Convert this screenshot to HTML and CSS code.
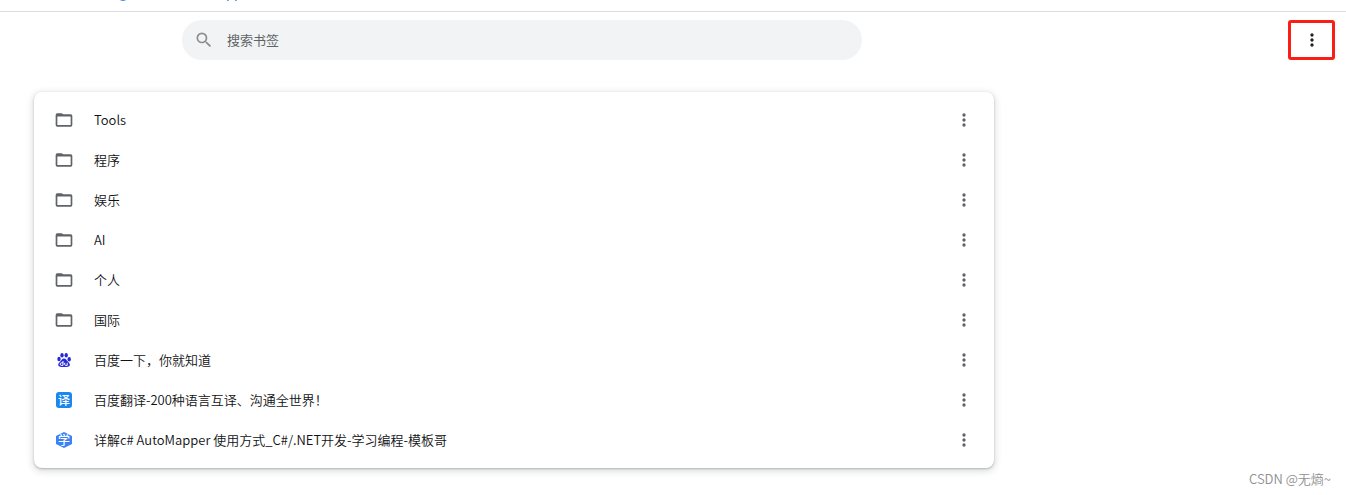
FILE: index.html
```html
<!DOCTYPE html>
<html lang="zh-CN">
<head>
<meta charset="utf-8">
<title>书签</title>
<link rel="stylesheet" href="styles.css">
</head>
<body>
<svg class="sprite" aria-hidden="true">
  <symbol id="folder" viewBox="0 0 24 24"><path fill-rule="evenodd" d="M4 4h5.200l2 1.200H20a2 2 0 0 1 2 2v10.800a2 2 0 0 1-2 2H4a2 2 0 0 1-2-2V6a2 2 0 0 1 2-2zm0 3.800v10.200h16V7.800z"/></symbol>
  <symbol id="dots" viewBox="0 0 24 24"><circle cx="12" cy="6" r="2"/><circle cx="12" cy="12" r="2"/><circle cx="12" cy="18" r="2"/></symbol>
</svg>
<nav class="bookmark-bar"><span class="dot"></span><a class="bar-link" href="#">pp</a></nav>
<header class="toolbar">
  <label class="search">
    <svg class="search-icon" viewBox="0 0 24 24" aria-hidden="true"><path d="M15.500 14h-.79l-.28-.27A6.470 6.470 0 0 0 16 9.500 6.500 6.500 0 1 0 9.500 16c1.610 0 3.090-.59 4.230-1.570l.27.28v.79l5 4.990L20.490 19l-4.990-5zm-6 0C7.010 14 5 11.990 5 9.500S7.010 5 9.500 5 14 7.010 14 9.500 11.990 14 9.500 14z"/></svg>
    <input class="search-input" type="search" placeholder="搜索书签" aria-label="搜索书签">
  </label>
  <button class="main-menu" type="button" aria-label="更多"><svg class="icon" viewBox="0 0 24 24"><use href="#dots"/></svg></button>
</header>
<main class="content">
  <ul class="card">
    <li class="row"><svg class="icon"><use href="#folder"/></svg><span class="title">Tools</span><button class="more" type="button" aria-label="更多操作"><svg class="icon"><use href="#dots"/></svg></button></li>
    <li class="row"><svg class="icon"><use href="#folder"/></svg><span class="title">程序</span><button class="more" type="button" aria-label="更多操作"><svg class="icon"><use href="#dots"/></svg></button></li>
    <li class="row"><svg class="icon"><use href="#folder"/></svg><span class="title">娱乐</span><button class="more" type="button" aria-label="更多操作"><svg class="icon"><use href="#dots"/></svg></button></li>
    <li class="row"><svg class="icon"><use href="#folder"/></svg><span class="title">AI</span><button class="more" type="button" aria-label="更多操作"><svg class="icon"><use href="#dots"/></svg></button></li>
    <li class="row"><svg class="icon"><use href="#folder"/></svg><span class="title">个人</span><button class="more" type="button" aria-label="更多操作"><svg class="icon"><use href="#dots"/></svg></button></li>
    <li class="row"><svg class="icon"><use href="#folder"/></svg><span class="title">国际</span><button class="more" type="button" aria-label="更多操作"><svg class="icon"><use href="#dots"/></svg></button></li>
    <li class="row"><svg class="icon" viewBox="0 0 20 20"><g fill="#2529d8"><ellipse cx="5" cy="9" rx="1.700" ry="2.200"/><ellipse cx="8" cy="5.300" rx="1.700" ry="2.300"/><ellipse cx="12.200" cy="5.300" rx="1.700" ry="2.300"/><ellipse cx="15.200" cy="9.200" rx="1.700" ry="2.200"/><path d="M10 8.500c2 0 2.400 1.700 3.800 3s2.500 2.500 1.900 4.100c-.6 1.500-2.200 1.500-5.700 1.300-3.500.2-5 .2-5.600-1.300-.6-1.600.5-2.800 1.900-4.100s1.700-3 3.700-3z"/></g><path d="M9 11v4.400H7.500a1.300 1.300 0 0 1 0-2.600H9M10.700 12.800v1.500c0 .8.300 1.100 1 1.100h1.500v-2.600" fill="none" stroke="#fff"/></svg><span class="title">百度一下，你就知道</span><button class="more" type="button" aria-label="更多操作"><svg class="icon"><use href="#dots"/></svg></button></li>
    <li class="row"><span class="badge badge-square" aria-hidden="true">译</span><span class="title">百度翻译-200种语言互译、沟通全世界！</span><button class="more" type="button" aria-label="更多操作"><svg class="icon"><use href="#dots"/></svg></button></li>
    <li class="row"><span class="badge badge-hex" aria-hidden="true">学</span><span class="title">详解c# AutoMapper 使用方式_C#/.NET开发-学习编程-模板哥</span><button class="more" type="button" aria-label="更多操作"><svg class="icon"><use href="#dots"/></svg></button></li>
  </ul>
</main>
<footer class="watermark">CSDN @无熵~</footer>
</body>
</html>
```
FILE: styles.css
```css
* { box-sizing: border-box; }
body {
  margin: 0;
  background: #fff;
  color: #111214;
  font: 350 13px/20px "Noto Sans CJK SC", sans-serif;
}
button { border: 0; background: none; padding: 0; font: inherit; cursor: pointer; }
.sprite { display: none; }
.icon { width: 20px; height: 20px; fill: #5f6368; flex: none; display: block; }

.bookmark-bar {
  display: flex;
  align-items: flex-end;
  height: 12px;
  padding-left: 118px;
  border-bottom: 1px solid #dadce0;
  overflow: hidden;
}
.dot { width: 10px; height: 10px; margin: 0 98px 10px 0; border-radius: 50%; background: #4c8bf5; flex: none; }
.bar-link { color: #3f6fae; font-weight: 400; text-decoration: none; padding-bottom: 8px; }

.toolbar {
  display: flex;
  justify-content: space-between;
  padding: 8px 11px 0 182px;
}
.search {
  display: flex;
  align-items: center;
  gap: 13px;
  flex: 0 1 680px;
  height: 40px;
  padding: 0 12px;
  border-radius: 20px;
  background: #f1f3f4;
}
.search-icon { width: 20px; height: 20px; fill: #8a8d91; flex: none; }
.search-input {
  flex: 1;
  min-width: 0;
  border: 0;
  padding: 0;
  outline: 0;
  background: none;
  font: inherit;
}
.search-input::placeholder { color: #5f6368; font-weight: 400; opacity: 1; }
.main-menu {
  display: grid;
  place-items: center;
  width: 47px;
  height: 40px;
  border: 3px solid #fb1e12;
  border-radius: 3px;
}
.main-menu .icon { fill: #202124; }

.content { padding: 32px 34px 0; }
.card {
  max-width: 960px;
  margin: 0;
  padding: 8px 20px;
  list-style: none;
  border-radius: 8px;
  background: #fff;
  box-shadow: 0 1px 2px rgba(60, 64, 67, .3), 0 2px 6px 2px rgba(60, 64, 67, .15);
}
.row { display: flex; align-items: center; height: 40px; }
.title {
  flex: 1;
  min-width: 0;
  margin-left: 20px;
  overflow: hidden;
  text-overflow: ellipsis;
  white-space: nowrap;
}
.badge {
  display: grid;
  place-items: center;
  width: 16px;
  height: 16px;
  margin: 0 2px;
  color: #fff;
  font-size: 12px;
  font-weight: 500;
  line-height: 16px;
  flex: none;
}
.badge-square { border-radius: 3px; background: #1a86f0; }
.badge-hex { background: #3c82f7; clip-path: polygon(50% 0, 100% 25%, 100% 75%, 50% 100%, 0 75%, 0 25%); }

.watermark {
  padding: 1px 15px 0 0;
  text-align: right;
  color: #909090;
}
```
